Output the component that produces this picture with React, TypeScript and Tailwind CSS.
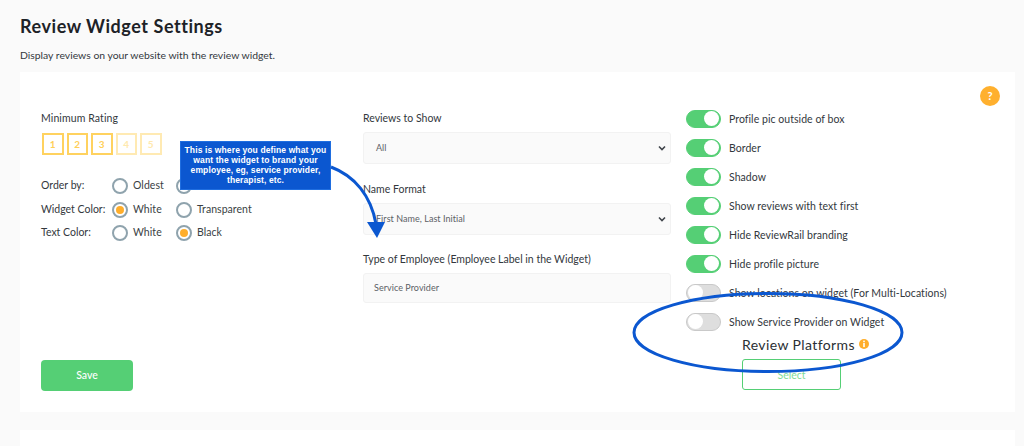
import React from "react";

const font = { fontFamily: 'Lato, "Liberation Sans", sans-serif' };

function Radio({ on, label, w }: { on?: boolean; label: string; w: string }) {
  return (
    <div className={`flex items-center gap-[5px] ${w}`}>
      <span className="flex h-[16px] w-[16px] shrink-0 items-center justify-center rounded-full border-2 border-[#8fa3ad] bg-white">
        {on && <span className="h-[8px] w-[8px] rounded-full bg-[#ffae2b]" />}
      </span>
      <span className="text-[10.5px] tracking-[0.05px] text-[#3a3f44]">{label}</span>
    </div>
  );
}

function Toggle({ on, label }: { on?: boolean; label: string }) {
  return (
    <div className="flex h-[29px] items-center gap-[8px]">
      <span
        className={`flex h-[18px] w-[35px] shrink-0 items-center rounded-full border p-[1px] ${
          on ? "justify-end border-[#55cf75] bg-[#55cf75]" : "justify-start border-[#c9c9c9] bg-[#dedede]"
        }`}
      >
        <span className="h-[15px] w-[15px] rounded-full bg-white" />
      </span>
      <span className="whitespace-nowrap pt-[2px] text-[10.5px] tracking-[0.05px] text-[#33383d]">{label}</span>
    </div>
  );
}

function Field({ label, value, select, h, mb }: { label: string; value: string; select?: boolean; h: string; mb: string }) {
  return (
    <div className={mb}>
      <div className="h-[21px] text-[10.5px] leading-[14px] text-[#33383d]">{label}</div>
      <div
        className={`flex items-center justify-between rounded-[3px] border border-[#f2f2f2] bg-[#fafafa] pr-[3px] text-[9px] tracking-[0.05px] text-[#5c6166] ${h} ${
          select ? "pl-[12px]" : "pl-[10px]"
        }`}
      >
        <span>{value}</span>
        {select && (
          <svg width="10" height="10" viewBox="0 0 10 10" fill="none" stroke="#3f444a" strokeWidth="1.6">
            <path d="M2 3.5 L5 6.5 L8 3.5" />
          </svg>
        )}
      </div>
    </div>
  );
}

export default function App() {
  return (
    <div className="relative h-[446px] w-[1024px] overflow-hidden bg-[#fafafa]" style={font}>
      <div className="px-[20px] pt-[14px]">
        <h1 className="h-[24px] text-[18px] font-bold leading-[24px] tracking-[0.55px] text-[#1d2227]">
          Review Widget Settings
        </h1>
        <p className="mt-[10px] h-[14px] text-[10.4px] leading-[14px] text-[#33383d]">
          Display reviews on your website with the review widget.
        </p>
      </div>

      <div className="relative ml-[20px] mt-[10px] flex h-[340px] w-[995px] bg-white pl-[21px] pt-[39px]">
        <div className="flex w-[322px] shrink-0 flex-col">
          <div className="h-[14px] text-[10.5px] leading-[14px] tracking-[0.1px] text-[#33383d]">Minimum Rating</div>
          <div className="ml-[1px] mt-[8px] flex gap-[3px]">
            {[1, 2, 3, 4, 5].map((n) => (
              <span
                key={n}
                className={`flex h-[22px] w-[21.5px] items-center justify-center border-2 text-[10px] font-bold ${
                  n <= 3 ? "border-[#ffd25f] text-[#ffcf58]" : "border-[#ffeab3] text-[#ffe9ae]"
                }`}
              >
                {n}
              </span>
            ))}
          </div>
          <div className="mt-[23px] flex flex-col gap-[7.5px]">
            {[
              { t: "Order by:", a: "Oldest", b: "Newest", on: 0 },
              { t: "Widget Color:", a: "White", b: "Transparent", on: 1 },
              { t: "Text Color:", a: "White", b: "Black", on: 2 },
            ].map((r) => (
              <div key={r.t} className="flex h-[16px] items-center">
                <span className="w-[71px] text-[10.5px] text-[#33383d]">{r.t}</span>
                <Radio on={r.on === 1} label={r.a} w="w-[64px]" />
                <Radio on={r.on === 2} label={r.b} w="w-[90px]" />
              </div>
            ))}
          </div>
          <button className="mt-[119px] h-[31px] w-[92px] rounded-[4px] bg-[#55cf75] text-[10.5px] font-medium text-white">
            Save
          </button>
        </div>

        <div className="w-[308px] shrink-0">
          <Field label="Reviews to Show" value="All" select h="h-[32px]" mb="mb-[18px]" />
          <Field label="Name Format" value="First Name, Last Initial" select h="h-[32px]" mb="mb-[17px]" />
          <Field label="Type of Employee (Employee Label in the Widget)" value="Service Provider" h="h-[30px]" mb="mb-0" />
        </div>

        <div className="ml-[15px] -mt-[7px] flex flex-col">
          <Toggle on label="Profile pic outside of box" />
          <Toggle on label="Border" />
          <Toggle on label="Shadow" />
          <Toggle on label="Show reviews with text first" />
          <Toggle on label="Hide ReviewRail branding" />
          <Toggle on label="Hide profile picture" />
          <Toggle label="Show locations on widget (For Multi-Locations)" />
          <Toggle label="Show Service Provider on Widget" />
          <div className="ml-[56px] -mt-[2px] flex h-[20px] items-center gap-[4px]">
            <span className="whitespace-nowrap text-[14px] tracking-[0.4px] text-[#2a2f34]">Review Platforms</span>
            <svg width="10" height="10" viewBox="0 0 10 10">
              <circle cx="5" cy="5" r="5" fill="#ffae2b" />
              <rect x="4.2" y="1.6" width="1.6" height="1.5" fill="#fff" />
              <rect x="4.2" y="3.9" width="1.6" height="4.2" fill="#fff" />
            </svg>
          </div>
          <button className="ml-[56px] mt-[5px] h-[31px] w-[99px] rounded-[3px] border-[1.5px] border-[#55cf75] bg-white pt-[2px] text-[10.5px] text-[#7fdc98]">
            Select
          </button>
        </div>

        <span className="absolute left-[960px] top-[14px] flex h-[20px] w-[20px] items-center justify-center rounded-full bg-[#ffb02e] text-[11px] font-bold text-white">
          ?
        </span>
      </div>

      <div className="ml-[20px] mt-[18px] h-[40px] w-[995px] bg-white" />

      <div
        className="absolute left-[180px] top-[141px] flex h-[49px] w-[151px] items-center justify-center border border-[#1f6ee0] bg-[#0b57d0] pb-[1px] text-center text-[8.5px] font-bold leading-[10px] tracking-[0.12px] text-white"
        style={{ fontFamily: '"Liberation Sans", Arial, sans-serif' }}
      >
        <span>
          This is where you define what you
          <br />
          want the widget to brand your
          <br />
          employee, eg, service provider,
          <br />
          therapist, etc.
        </span>
      </div>

      <svg className="pointer-events-none absolute left-0 top-0" width="1024" height="446" fill="none">
        <path d="M331 167 C355 176 371 196 376 224" stroke="#0b57d0" strokeWidth="3" />
        <path d="M367 222 L385 222 L377 238 Z" fill="#0b57d0" />
        <ellipse cx="768" cy="332.5" rx="134" ry="39" stroke="#0b57d0" strokeWidth="3" />
      </svg>
    </div>
  );
}
